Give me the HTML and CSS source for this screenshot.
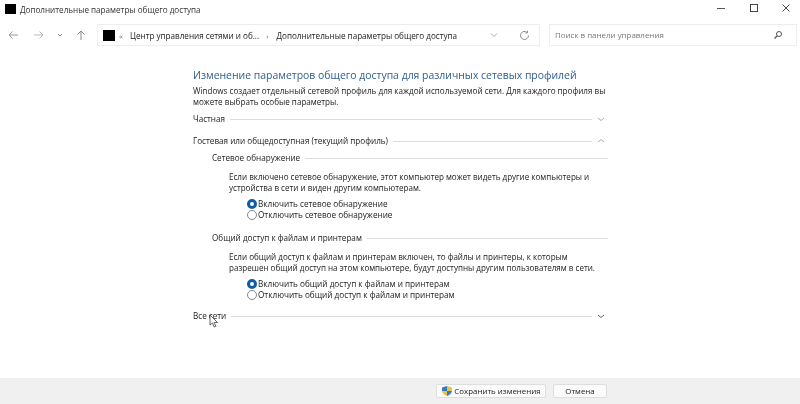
FILE: index.html
```html
<!DOCTYPE html>
<html lang="ru">
<head>
<meta charset="utf-8">
<title>Дополнительные параметры общего доступа</title>
<link rel="stylesheet" href="styles.css">
</head>
<body>
<div class="window">
  <header class="titlebar">
    <span class="black-icon small"></span>
    <span class="title">Дополнительные параметры общего доступа</span>
    <div class="winbtns">
      <svg width="10" height="10" viewBox="0 0 10 10"><path d="M1 5.500h8" stroke="#555" fill="none"/></svg>
      <svg width="10" height="10" viewBox="0 0 10 10"><rect x="1.500" y="1.500" width="7" height="7" stroke="#444" fill="none"/></svg>
      <svg width="10" height="10" viewBox="0 0 10 10"><path d="M1.500 1.500l7 7M8.500 1.500l-7 7" stroke="#444" fill="none"/></svg>
    </div>
  </header>
  <nav class="navbar">
    <div class="navbtns">
      <svg width="12" height="12" viewBox="0 0 12 12"><path d="M11 6H2M5.500 2.500L2 6l3.500 3.500" stroke="#999" fill="none"/></svg>
      <svg class="fwd" width="12" height="12" viewBox="0 0 12 12"><path d="M1 6h9M6.500 2.500L10 6l-3.500 3.500" stroke="#bbb" fill="none"/></svg>
      <svg width="8" height="12" viewBox="0 0 8 12"><path d="M2 5l2 2 2-2" stroke="#888" fill="none"/></svg>
      <svg width="12" height="12" viewBox="0 0 12 12"><path d="M6 11V2M2.500 5.500L6 2l3.500 3.500" stroke="#888" fill="none"/></svg>
    </div>
    <div class="address">
      <span class="black-icon"></span>
      <span class="crumb-sep">«</span>
      <span class="crumb">Центр управления сетями и об...</span>
      <span class="crumb-sep arrow">›</span>
      <span class="crumb">Дополнительные параметры общего доступа</span>
      <svg class="addr-chev" width="8" height="8" viewBox="0 0 8 8"><path d="M1 2.500l3 3 3-3" stroke="#aaa" fill="none"/></svg>
      <svg class="addr-refresh" width="11" height="11" viewBox="0 0 11 11"><path d="M9.500 5.500a4 4 0 1 1-1.200-2.900M8.500 0.800v2h-2" stroke="#888" fill="none"/></svg>
    </div>
    <div class="search">
      <span>Поиск в панели управления</span>
      <svg width="10" height="10" viewBox="0 0 10 10"><circle cx="6" cy="4" r="2.500" stroke="#555" fill="none"/><path d="M4 6L1.500 8.500" stroke="#555" stroke-width="1.300"/></svg>
    </div>
  </nav>
  <main class="content">
    <h1>Изменение параметров общего доступа для различных сетевых профилей</h1>
    <p class="intro">Windows создает отдельный сетевой профиль для каждой используемой сети. Для каждого профиля вы можете выбрать особые параметры.</p>
    <div class="section s-private">
      <span>Частная</span><i class="rule"></i>
      <svg width="10" height="10" viewBox="0 0 10 10"><path d="M2 4L5 6.500 8 4" stroke="#aaa" fill="none"/></svg>
    </div>
    <div class="section s-guest">
      <span>Гостевая или общедоступная (текущий профиль)</span><i class="rule"></i>
      <svg width="10" height="10" viewBox="0 0 10 10"><path d="M2 6L5 3.500 8 6" stroke="#aaa" fill="none"/></svg>
    </div>
    <div class="sub">
      <div class="subhead"><span>Сетевое обнаружение</span><i class="rule"></i></div>
      <p class="desc">Если включено сетевое обнаружение, этот компьютер может видеть другие компьютеры и устройства в сети и виден другим компьютерам.</p>
      <div class="radios">
        <label class="radio"><i class="dot on"></i>Включить сетевое обнаружение</label>
        <label class="radio"><i class="dot"></i>Отключить сетевое обнаружение</label>
      </div>
      <div class="subhead second"><span>Общий доступ к файлам и принтерам</span><i class="rule"></i></div>
      <p class="desc">Если общий доступ к файлам и принтерам включен, то файлы и принтеры, к которым разрешен общий доступ на этом компьютере, будут доступны другим пользователям в сети.</p>
      <div class="radios">
        <label class="radio"><i class="dot on"></i>Включить общий доступ к файлам и принтерам</label>
        <label class="radio"><i class="dot"></i>Отключить общий доступ к файлам и принтерам</label>
      </div>
    </div>
    <div class="section s-all">
      <span>Все сети</span><i class="rule"></i>
      <svg width="10" height="10" viewBox="0 0 10 10"><path d="M2 4L5 6.500 8 4" stroke="#666" fill="none"/></svg>
    </div>
  </main>
  <footer class="footer">
    <button class="btn save">
      <svg width="12" height="12" viewBox="0 0 12 12"><path d="M1 2.500L6 1v5H1z" fill="#3a78c8"/><path d="M6 1l5 1.500V6H6z" fill="#e8c33c"/><path d="M1 6h5v5C3.500 10 1.500 8.500 1 6z" fill="#e8c33c"/><path d="M6 6h5c-.5 2.500-2.500 4-5 5z" fill="#3a78c8"/></svg>
      Сохранить изменения
    </button>
    <button class="btn cancel">Отмена</button>
  </footer>
  <svg class="cursor" width="11" height="14" viewBox="0 0 11 14"><path d="M1 1v10l2.500-2 1.700 4 1.600-.7L5.200 8.500H8.500z" fill="#fff" stroke="#444" stroke-width=".8"/></svg>
</div>
</body>
</html>
```

FILE: styles.css
```css
* { box-sizing: border-box; }
html, body { margin: 0; padding: 0; }
body {
  width: 800px;
  height: 404px;
  overflow: hidden;
  background: #fff;
  font-family: "Open Sans", "Noto Sans", sans-serif;
  color: #333;
}
.window {
  position: relative;
  width: 800px;
  height: 404px;
  display: flex;
  flex-direction: column;
  background: #fff;
  filter: blur(0.35px);
}
.titlebar {
  height: 18px;
  display: flex;
  align-items: center;
  padding-left: 5px;
  flex: none;
}
.black-icon {
  display: block;
  width: 12px;
  height: 11px;
  background: #000;
  flex: none;
}
.black-icon.small { width: 11px; height: 10px; }
.title {
  margin-left: 4px;
  font-size: 8.120px;
  color: #333;
}
.winbtns {
  margin-left: auto;
  margin-right: 9px;
  margin-bottom: 2px;
  display: flex;
  gap: 22.500px;
}
.navbar {
  height: 22px;
  margin-top: 6px;
  display: flex;
  align-items: stretch;
  flex: none;
}
.navbtns {
  width: 97px;
  padding-left: 7px;
  display: flex;
  align-items: center;
  gap: 11px;
}
.fwd { margin-left: 3px; }
.address {
  width: 443px;
  display: flex;
  align-items: center;
  padding-left: 5px;
  border: 1px solid #eee;
  font-size: 8.120px;
  color: #222;
}
.crumb-sep { margin: 0 7px 0 4px; color: #777; font-size: 8px; }
.crumb-sep.arrow { margin: 0 8px 0 7px; }
.addr-chev { margin-left: auto; margin-right: 21px; }
.addr-refresh { margin-right: 9px; }
.search {
  width: 248px;
  margin-left: 9px;
  display: flex;
  align-items: center;
  justify-content: space-between;
  padding: 0 13px 0 5px;
  border: 1px solid #eee;
  font-size: 7.950px;
  color: #777;
}
.content {
  flex: 1;
  padding: 22px 192px 0 193px;
  min-height: 0;
}
h1 {
  margin: 0;
  font-size: 10.450px;
  line-height: 14px;
  font-weight: 400;
  color: #2f5d92;
  white-space: nowrap;
}
.intro {
  margin: 2.500px 0 0;
  font-size: 8.100px;
  line-height: 11px;
  color: #222;
  width: 420px;
}
.section, .subhead {
  display: flex;
  align-items: center;
  font-size: 8.150px;
  line-height: 12px;
  white-space: nowrap;
  color: #222;
}
.rule {
  flex: 1;
  height: 1px;
  margin-left: 5px;
  background: #ddd;
}
.section svg { margin-left: 4px; flex: none; }
.section { margin-right: 2px; }
.s-private { margin-top: 6.500px; }
.s-guest { margin-top: 10px; }
.sub { padding-left: 19px; }
.subhead { margin-top: 5px; }
.subhead.second { margin-top: 12px; }
.desc {
  margin: 7px 0 0 17px;
  width: 372px;
  font-size: 8.050px;
  line-height: 11px;
  color: #222;
}
.radios { margin: 5px 0 0 35px; }
.radio {
  display: flex;
  align-items: center;
  height: 11px;
  font-size: 8.200px;
  color: #222;
}
.dot {
  width: 10px;
  height: 10px;
  margin-right: 1px;
  border-radius: 50%;
  border: 1px solid #888;
  background: #fff;
  flex: none;
}
.dot.on { border: 3px solid #0f5ba8; }
.s-all { margin-top: 10px; }
.footer {
  height: 26px;
  flex: none;
  display: flex;
  align-items: center;
  background: #f0f0f0;
  padding-left: 436px;
  gap: 7px;
}
.btn {
  height: 14px;
  padding: 0;
  display: flex;
  align-items: center;
  justify-content: center;
  border: 1px solid #dedede;
  border-radius: 2px;
  background: #fbfbfb;
  font: 7.900px "Open Sans", "Noto Sans", sans-serif;
  color: #222;
}
.save { width: 110px; gap: 1px; }
.cancel { width: 54px; }
.cursor { position: absolute; left: 209px; top: 314px; }
```
